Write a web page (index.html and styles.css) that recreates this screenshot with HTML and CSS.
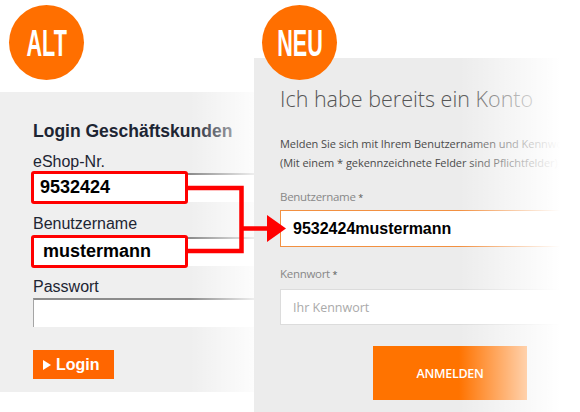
FILE: index.html
```html
<!DOCTYPE html>
<html lang="de">
<head>
    <meta charset="UTF-8">
    <meta name="viewport" content="width=device-width, initial-scale=1.0">
    <title>Login alt / neu</title>
    <link rel="stylesheet" href="styles.css">
</head>
<body>
    <div class="compare">
        <section class="panel panel-old">
            <span class="badge"><span class="badge-text">ALT</span></span>
            <h2 class="old-title">Login Geschäftskunden</h2>
            <label class="old-label">eShop-Nr.</label>
            <div class="old-input">
                <span class="mark">9532424</span>
            </div>
            <label class="old-label old-label-user">Benutzername</label>
            <div class="old-input old-input-user">
                <span class="mark mark-user">mustermann</span>
            </div>
            <label class="old-label">Passwort</label>
            <div class="old-input old-input-pass"></div>
            <button class="old-button"><span class="play"></span>Login</button>
        </section>

        <section class="panel panel-new">
            <span class="badge"><span class="badge-text">NEU</span></span>
            <h2 class="new-title">Ich habe bereits ein Konto</h2>
            <p class="new-intro">Melden Sie sich mit Ihrem Benutzernamen und Kennwort an.<br>(Mit einem * gekennzeichnete Felder sind Pflichtfelder)</p>
            <label class="new-label">Benutzername <span class="req">*</span></label>
            <div class="new-input new-input-filled">9532424mustermann</div>
            <label class="new-label new-label-pass">Kennwort <span class="req">*</span></label>
            <div class="new-input new-input-empty">Ihr Kennwort</div>
            <button class="new-button">ANMELDEN</button>
        </section>

        <!-- red annotation: both old fields go into the one new field -->
        <svg class="links" width="580" height="412" viewBox="0 0 580 412">
            <polyline points="187,188 241.5,188 241.5,251 187,251" fill="none" stroke="#ff0000" stroke-width="4.5" stroke-linejoin="miter"/>
            <line x1="241" y1="228.5" x2="270" y2="228.5" stroke="#ff0000" stroke-width="4.5"/>
            <polygon points="267,215 286,228.5 267,242" fill="#ff0000"/>
        </svg>
    </div>
</body>
</html>
```

FILE: styles.css
```css
body {
    margin: 0;
    background: #fff;
    overflow: hidden;
}

.compare {
    position: relative;
    display: flex;
    align-items: flex-start;
    width: 580px;
    height: 412px;
}

.panel {
    position: relative;
    box-sizing: border-box;
}

.badge {
    position: absolute;
    z-index: 3;
    width: 75px;
    height: 75px;
    border-radius: 50%;
    background: #ff6f00;
    color: #fff;
    font: bold 36px/77px "Liberation Sans", Arial, sans-serif;
    text-align: center;
}

.badge-text {
    display: inline-block;
    transform: scaleX(0.6);
}

/* old login */

.panel-old {
    width: 254px;
    height: 300px;
    margin-top: 92px;
    padding: 29px 0 0 33px;
    background: #efefef;
    font-family: "Liberation Sans", Arial, sans-serif;
    color: #1d2533;
}

.panel-old::after {
    content: "";
    position: absolute;
    inset: 0;
    background: linear-gradient(to right, rgba(255, 255, 255, 0) 190px, rgba(255, 255, 255, 0.85) 254px);
    pointer-events: none;
}

.panel-old .badge {
    left: 9px;
    top: -87px;
}

.old-title {
    margin: 0;
    font-size: 17.5px;
    line-height: 20px;
    font-weight: bold;
}

.old-label {
    display: block;
    margin-top: 12px;
    font-size: 16px;
    line-height: 18px;
}

.old-label-user {
    margin-top: 13px;
}

.old-input {
    position: relative;
    height: 29px;
    margin-top: 2px;
    box-sizing: border-box;
    background: #fff;
    border-top: 2px solid #8c8c8c;
    border-left: 1px solid #a5a5a5;
}

.old-input-user {
    margin-top: 4px;
}

.mark {
    position: absolute;
    z-index: 2;
    left: -3px;
    top: -4px;
    width: 157px;
    height: 33px;
    box-sizing: border-box;
    display: flex;
    align-items: center;
    padding-left: 6px;
    border: 3px solid #ff0000;
    border-radius: 3px;
    background: #fff;
    color: #000;
    font-size: 18px;
    font-weight: bold;
}

.mark-user {
    padding-left: 9px;
}

.old-button {
    display: flex;
    align-items: center;
    width: 81px;
    height: 29px;
    margin-top: 23px;
    padding: 0 0 0 10px;
    border: none;
    background: #ff6600;
    color: #fff;
    font: bold 16px "Liberation Sans", Arial, sans-serif;
}

.play {
    width: 0;
    height: 0;
    margin-right: 5px;
    border-left: 8px solid #fff;
    border-top: 5px solid transparent;
    border-bottom: 5px solid transparent;
}

/* new login */

.panel-new {
    width: 326px;
    height: 354px;
    margin-top: 58px;
    padding: 27px 0 0 26px;
    background: #ececec;
    font-family: "Open Sans", sans-serif;
    color: #4a4a4a;
}

.panel-new::after {
    content: "";
    position: absolute;
    inset: 0;
    background: linear-gradient(to right, rgba(255, 255, 255, 0) 205px, #fff 306px);
    pointer-events: none;
}

.panel-new .badge {
    left: 8px;
    top: -53px;
}

.new-title {
    margin: 0;
    font-size: 21.5px;
    line-height: 28px;
    font-weight: 300;
    color: #555;
}

.new-intro {
    margin: 21px 0 0;
    font-size: 11px;
    line-height: 19px;
    white-space: nowrap;
    letter-spacing: -0.05px;
}

.new-label {
    display: block;
    margin-top: 17px;
    font-size: 11.5px;
    line-height: 16px;
    letter-spacing: -0.3px;
    color: #888;
}

.new-label-pass {
    margin-top: 19px;
}

.req {
    color: #555;
    font-size: 9px;
}

.new-input {
    display: flex;
    align-items: center;
    height: 37px;
    margin-top: 4px;
    padding-left: 12px;
    box-sizing: border-box;
    background: #fff;
    border: 1px solid #dcdcdc;
}

.new-input-filled {
    border-color: #f29041;
    color: #000;
    font: bold 16px "Liberation Sans", Arial, sans-serif;
}

.new-input-empty {
    height: 36px;
    margin-top: 6px;
    color: #aaa;
    font-size: 12.5px;
}

.new-button {
    display: block;
    width: 154px;
    height: 54px;
    margin: 21px 0 0 93px;
    border: none;
    background: #ff7300;
    color: #fff;
    font: 600 12.5px "Open Sans", sans-serif;
    letter-spacing: -0.3px;
}

.links {
    position: absolute;
    z-index: 5;
    left: 0;
    top: 0;
    pointer-events: none;
}
```
